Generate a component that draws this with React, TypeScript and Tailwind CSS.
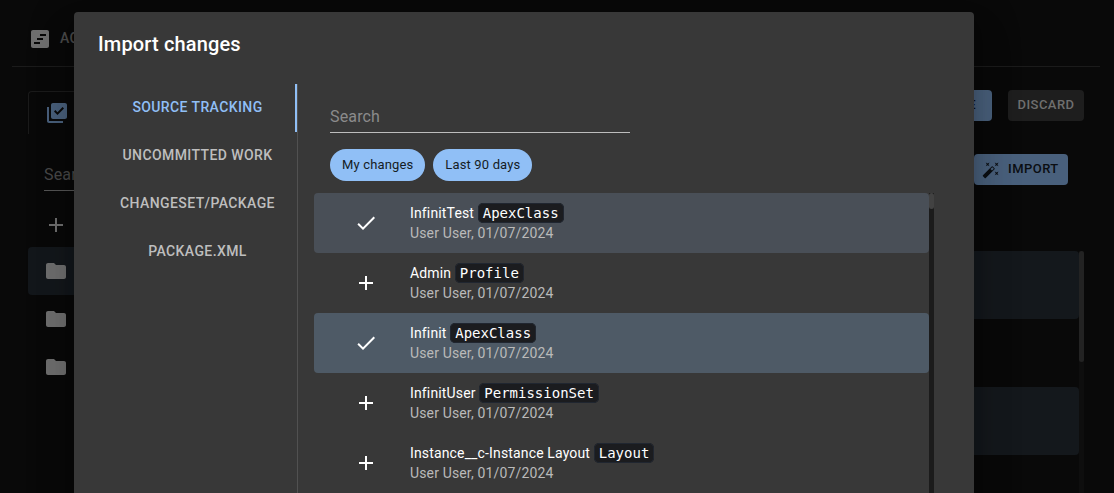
import { MdAdd, MdCheck, MdFolder, MdLibraryAddCheck } from "react-icons/md";

type Change = { name: string; type: string; rowClass: string; selected: boolean };

const changes: Change[] = [
  { name: "InfinitTest", type: "ApexClass", rowClass: "bg-[#494f57]", selected: true },
  { name: "Admin", type: "Profile", rowClass: "", selected: false },
  { name: "Infinit", type: "ApexClass", rowClass: "bg-[#4e5a66]", selected: true },
  { name: "InfinitUser", type: "PermissionSet", rowClass: "", selected: false },
  { name: "Instance__c-Instance Layout", type: "Layout", rowClass: "", selected: false },
];

const tabs = ["SOURCE TRACKING", "UNCOMMITTED WORK", "CHANGESET/PACKAGE", "PACKAGE.XML"];

function TimelineIcon() {
  return (
    <svg className="size-6" viewBox="0 0 24 24" fill="currentColor">
      <path d="M19 3H5c-1.1 0-2 .9-2 2v14c0 1.1.9 2 2 2h14c1.1 0 2-.9 2-2V5c0-1.1-.9-2-2-2zm-7 14H6v-2h6v2zm3-4H9v-2h6v2zm3-4h-6V7h6v2z" />
    </svg>
  );
}

function WandIcon() {
  return (
    <svg className="size-[18px]" viewBox="0 0 24 24" fill="currentColor">
      <path d="M7.5 5.6 10 7 8.6 4.5 10 2 7.5 3.4 5 2l1.4 2.5L5 7zm12 9.8L17 14l1.4 2.5L17 19l2.5-1.4L22 19l-1.4-2.5L22 14zM22 2l-2.5 1.4L17 2l1.4 2.5L17 7l2.5-1.4L22 7l-1.4-2.5zm-7.63 5.29a.996.996 0 0 0-1.41 0L1.29 18.96c-.39.39-.39 1.02 0 1.41l2.34 2.34c.39.39 1.02.39 1.41 0L16.7 11.05c.39-.39.39-1.02 0-1.41l-2.33-2.35zm-1.03 5.49-2.12-2.12 2.44-2.44 2.12 2.12-2.44 2.44z" />
    </svg>
  );
}

function Workspace() {
  return (
    <div className="flex h-full flex-col overflow-hidden pr-[14px] pl-3 text-[#6f6f6f]">
      <header className="flex h-[67px] shrink-0 items-start border-b border-[#1b1b1b] pt-[27px] pl-4">
        <TimelineIcon />
        <span className="ml-2 text-sm leading-[22px] font-medium tracking-[0.4px] text-[#4a4a4a]">ACTIVITY</span>
      </header>
      <div className="flex min-h-0 grow justify-between pr-4 pl-4">
        <aside className="flex w-[46px] flex-col overflow-hidden pt-6">
          <div className="h-[43px] w-60 rounded-tl border-t border-l border-[#1b1b1b] pt-[9px] pl-4 text-[#49607c]">
            <MdLibraryAddCheck className="size-6" />
          </div>
          <div className="mt-[29px] ml-4 h-[28px] border-b border-[#555] text-base leading-6 tracking-[0.15px] text-[#484848]">Search</div>
          <div className="flex h-14 items-center pt-3 pl-4">
            <MdAdd className="size-6" />
          </div>
          <div className="flex h-12 items-center rounded-l bg-[#13171b] pl-4">
            <MdFolder className="size-6 shrink-0" />
          </div>
          <div className="flex h-12 items-center pl-4">
            <MdFolder className="size-6 shrink-0" />
          </div>
          <div className="flex h-12 items-center pl-4">
            <MdFolder className="size-6 shrink-0" />
          </div>
        </aside>
        <main className="flex w-[300px] flex-col pt-[23px]">
          <div className="flex justify-end gap-4 text-[13px] leading-5 font-medium tracking-[0.46px]">
            <div className="flex h-[31px] w-[90px] items-center justify-end rounded bg-[#49607c] pr-4 pb-px text-[#0b0e12]">SAVE</div>
            <div className="flex h-[31px] w-[76px] items-center justify-center rounded bg-[#1e1e1e] pb-px">DISCARD</div>
          </div>
          <div className="mt-[33px] mr-4 flex h-[31px] w-[94px] items-center gap-2 self-end rounded bg-[#49607c] pl-2 text-[13px] leading-5 font-medium tracking-[0.46px] text-[#0b0e12]">
            <WandIcon />
            <span className="pb-px">IMPORT</span>
          </div>
          <div className="mt-[66px] flex min-h-0 grow">
            <div className="flex grow flex-col gap-[68px]">
              <div className="h-[68px] shrink-0 rounded bg-[#14181c]" />
              <div className="h-[68px] shrink-0 rounded bg-[#14181c]" />
            </div>
            <div className="w-[5px] bg-[#0e0e0e]">
              <div className="h-[111px] rounded-sm bg-[#232323]" />
            </div>
          </div>
        </main>
      </div>
    </div>
  );
}

function ChangeRow({ change }: { change: Change }) {
  const Icon = change.selected ? MdCheck : MdAdd;
  return (
    <li className={`flex h-[60px] items-center rounded pl-10 ${change.rowClass}`}>
      <Icon className="size-6 text-white" />
      <div className="ml-8 text-sm leading-5 tracking-[0.15px]">
        <div className="h-5 whitespace-nowrap text-white">
          {change.name}{" "}
          <code className="rounded-[5px] border border-[#202630] bg-[#1b1c1f] px-1 py-px font-['DejaVu_Sans_Mono',monospace] text-sm leading-4 tracking-normal">
            {change.type}
          </code>
        </div>
        <div className="h-5 text-[#bababa]">User User, 01/07/2024</div>
      </div>
    </li>
  );
}

function ImportDialog() {
  return (
    <section className="flex h-[600px] w-[900px] flex-col rounded bg-[#383838] shadow-[0_11px_15px_-7px_rgba(0,0,0,0.2),0_24px_38px_3px_rgba(0,0,0,0.14),0_9px_46px_8px_rgba(0,0,0,0.12)]">
      <h2 className="h-[72px] px-6 pt-4 text-xl leading-8 font-medium tracking-[0.15px] text-white">Import changes</h2>
      <div className="flex min-h-0 grow pl-6">
        <nav className="w-[200px] border-r border-[#515151]">
          {tabs.map((tab, i) => (
            <div
              key={tab}
              className={`flex h-12 items-center justify-center pb-0.5 text-sm font-medium tracking-[0.4px] ${
                i === 0 ? "border-r-2 border-[#90bff6] pl-0.5 text-[#90bff6]" : "text-[#bebebe]"
              }`}
            >
              {tab}
            </div>
          ))}
        </nav>
        <div className="ml-4 flex w-[620px] flex-col">
          <div className="ml-4 h-[49px] w-[300px] border-b border-[#bdbdbd] pt-5 text-base leading-[25px] tracking-[0.15px] text-[#8b8b8b]">Search</div>
          <div className="mt-4 ml-4 flex gap-2 text-[13px] leading-8 text-[#151c24]">
            <span className="h-8 rounded-full bg-[#90bff6] px-3 tracking-[0.15px]">My changes</span>
            <span className="h-8 rounded-full bg-[#90bff6] px-3 tracking-[0.15px]">Last 90 days</span>
          </div>
          <div className="mt-3 flex min-h-0 grow">
            <ul className="grow">
              {changes.map((change) => (
                <ChangeRow key={change.name} change={change} />
              ))}
            </ul>
            <div className="w-[5px] bg-[#1b1b1b]">
              <div className="h-4 rounded-sm bg-[#424242]" />
            </div>
          </div>
        </div>
      </div>
    </section>
  );
}

export default function App() {
  return (
    <div className="relative h-screen overflow-hidden bg-[#090909] font-[Roboto,sans-serif]">
      <Workspace />
      <div className="absolute inset-0 flex items-start overflow-hidden pt-3 pl-[74px]">
        <ImportDialog />
      </div>
    </div>
  );
}
